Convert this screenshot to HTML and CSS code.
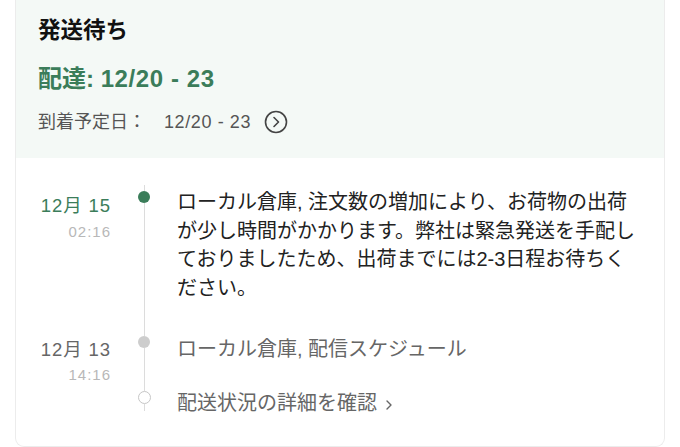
FILE: index.html
```html
<!DOCTYPE html>
<html lang="ja">
<head>
<meta charset="utf-8">
<link rel="stylesheet" href="styles.css">
</head>
<body>
<div class="card">
  <div class="head">
    <div class="title">発送待ち</div>
    <div class="eta">配達: <span class="num">12/20 - 23</span></div>
    <div class="arrive">到着予定日： <span class="num">12/20 - 23</span>
      <svg class="circ" width="24" height="24" viewBox="0 0 24 24"><circle cx="12" cy="12" r="10.5" fill="none" stroke="#444" stroke-width="1.6"/><path d="M10 7.5 L14.5 12 L10 16.5" fill="none" stroke="#444" stroke-width="1.6" stroke-linecap="round" stroke-linejoin="round"/></svg>
    </div>
  </div>
  <div class="timeline">
    <div class="row row-first">
      <div class="when"><div class="date active">12月 15</div><div class="time">02:16</div></div>
      <div class="rail"><span class="seg"></span><span class="dot dot-active"></span><span class="seg seg-fill"></span></div>
      <div class="text">ローカル倉庫, 注文数の増加により、お荷物の出荷が少し時間がかかります。弊社は緊急発送を手配しておりましたため、出荷までには2-3日程お待ちください。</div>
    </div>
    <div class="row row-second">
      <div class="when"><div class="date">12月 13</div><div class="time">14:16</div></div>
      <div class="rail"><span class="seg"></span><span class="dot dot-grey"></span><span class="seg seg-fill"></span></div>
      <div class="text muted">ローカル倉庫, 配信スケジュール</div>
    </div>
    <div class="row row-last">
      <div class="when"></div>
      <div class="rail"><span class="seg"></span><span class="dot dot-hollow"></span><span class="seg seg-end"></span></div>
      <div class="text muted">配送状況の詳細を確認 <svg class="chev" width="8" height="12" viewBox="0 0 8 12"><path d="M2 2 L6 6 L2 10" fill="none" stroke="#666" stroke-width="1.4" stroke-linecap="round" stroke-linejoin="round"/></svg></div>
    </div>
  </div>
</div>
</body>
</html>
```
FILE: styles.css
```css
* { box-sizing: border-box; }
html, body { margin: 0; padding: 0; background: #fff; }
body {
  font-family: "Liberation Sans", "Noto Sans CJK JP", sans-serif;
  color: #222;
  width: 680px;
  height: 447px;
  overflow: hidden;
}
.card {
  margin: 0 15px;
  width: 650px;
  border: 1px solid #ececec;
  border-top: none;
  border-radius: 0 0 9px 9px;
  background: #fff;
}
.head {
  background: #f4f9f6;
  padding: 16px 22px 22px 22px;
  display: flex;
  flex-direction: column;
}
.title {
  font-size: 22.5px;
  font-weight: bold;
  line-height: 30px;
  color: #111;
}
.eta {
  margin-top: 17px;
  font-size: 24px;
  line-height: 32px;
  font-weight: bold;
  color: #3b7d5a;
}
.eta .num { letter-spacing: 0.6px; }
.arrive {
  margin-top: 13px;
  font-size: 18px;
  line-height: 28px;
  color: #555;
  display: flex;
  align-items: center;
}
.arrive .num { margin-left: 18px; letter-spacing: 0.6px; }
.circ { margin-left: 13px; }
.timeline {
  padding: 27px 24px 28px 0;
  display: flex;
  flex-direction: column;
}
.row { display: flex; }
.when {
  width: 95px;
  flex: none;
  text-align: right;
  display: flex;
  flex-direction: column;
}
.date {
  font-size: 18.5px;
  line-height: 26px;
  color: #666;
  letter-spacing: 0.9px;
}
.date.active { color: #3b7d5a; }
.time {
  font-size: 15px;
  line-height: 20px;
  color: #b8b8b8;
  letter-spacing: 1px;
}
.row-first .date { padding-top: 8px; }
.row-first .time { margin-top: 3px; }
.row-second .date { padding-top: 7px; }
.row-second .time { margin-top: 2px; }
.rail {
  width: 34px;
  margin-left: 16px;
  flex: none;
  display: flex;
  flex-direction: column;
  align-items: center;
}
.seg { width: 1px; background: #dcdcdc; height: 6px; flex: none; }
.seg-fill { flex: 1; }
.seg-end { height: 7px; }
.dot { width: 12px; height: 12px; border-radius: 50%; flex: none; }
.dot-active { background: #3b7d5a; }
.dot-grey { background: #cdcdcd; }
.dot-hollow { width: 13px; height: 13px; background: #fff; border: 1.5px solid #c6c6c6; }
.text {
  margin-left: 16px;
  flex: 1;
  font-size: 20px;
  line-height: 28.5px;
  color: #222;
}
.text.muted { color: #666; }
.row-first .text { padding-top: 3px; padding-bottom: 28px; }
.row-second .text { padding-top: 5px; }
.row-last .text { padding-top: 4px; }
.chev { margin-left: 2px; vertical-align: -1px; }
```
